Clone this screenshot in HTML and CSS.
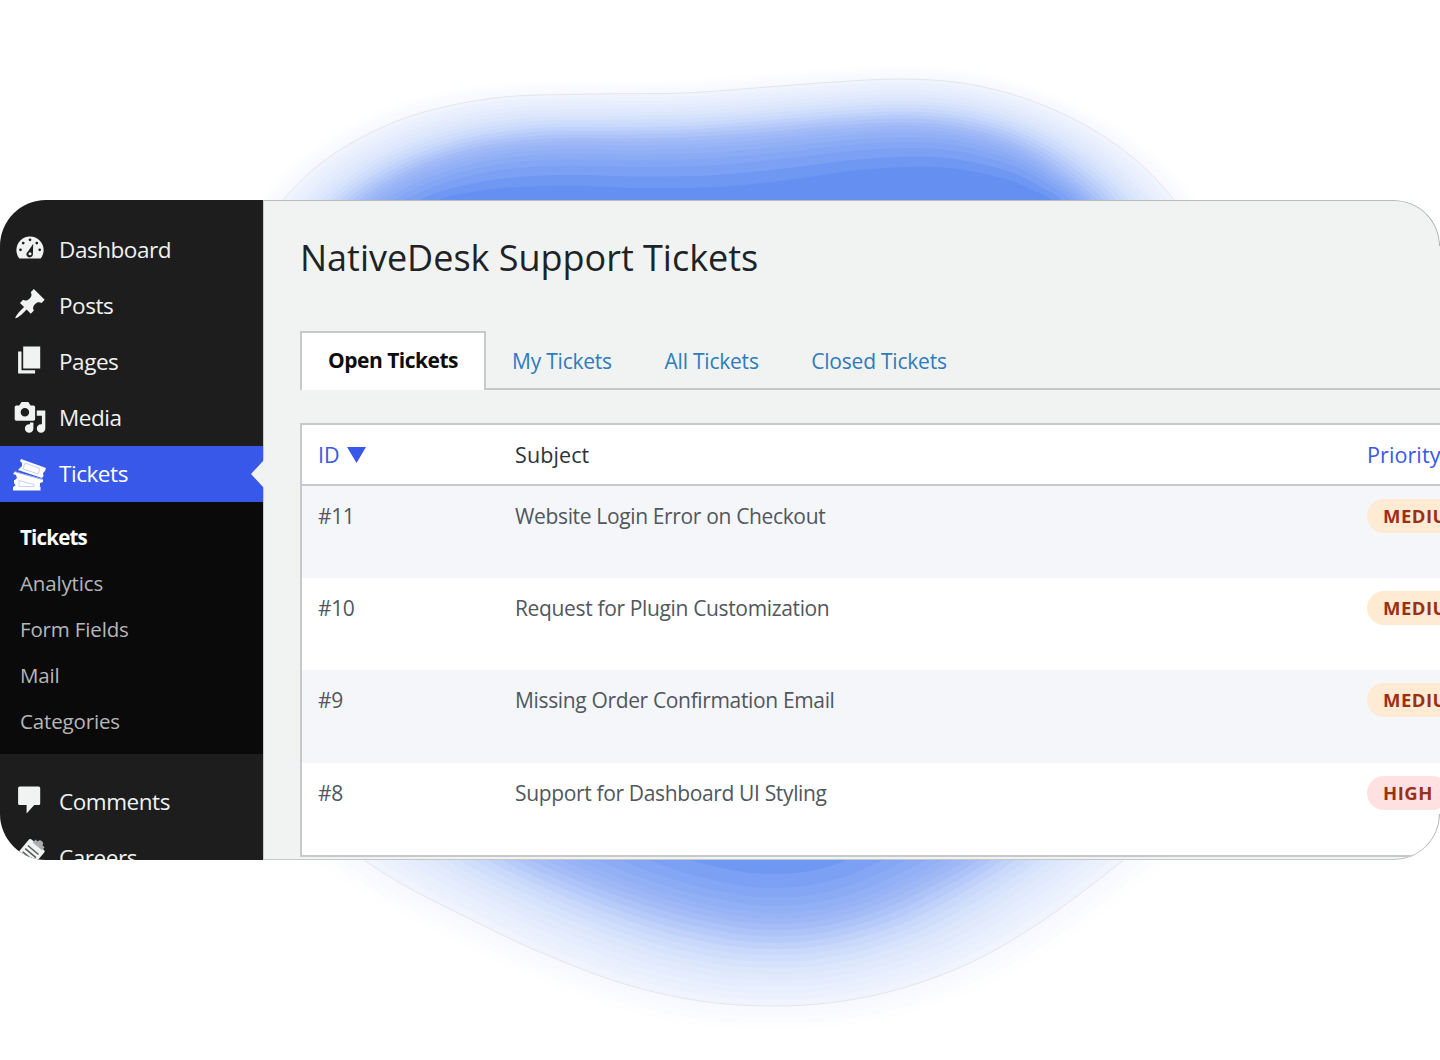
FILE: index.html
```
<!DOCTYPE html>
<html lang="en">
<head>
    <meta charset="UTF-8">
    <meta name="viewport" content="width=device-width, initial-scale=1.0">
    <title>NativeDesk Support Tickets</title>
    <link rel="stylesheet" href="styles.css">
</head>
<body>

    <div class="hero">
        <svg class="glow" id="glow" width="1440" height="1060" viewBox="0 0 1440 1060"></svg>

        <div class="card">
            <!-- Admin menu -->
            <nav class="sidebar">
                <a class="menu-item">
                    <svg class="icon" viewBox="0 .8 20 20">
                        <path d="M3.76 17h12.48c1.1-1.37 1.76-3.11 1.76-5 0-4.42-3.58-8-8-8s-8 3.58-8 8c0 1.89.66 3.63 1.76 5z"/>
                        <g class="cut">
                            <circle cx="10" cy="6" r=".8"/><circle cx="6" cy="7.9" r=".8"/><circle cx="14" cy="7.9" r=".8"/>
                            <circle cx="4.4" cy="11.9" r=".8"/><circle cx="15.7" cy="11.9" r=".8"/>
                            <path d="M11.9 8.3 11.7 14.2a1.900 1.900 0 1 1-2.900-1.400z"/>
                        </g>
                        <circle cx="10" cy="14.2" r=".9"/>
                    </svg>
                    <span>Dashboard</span>
                </a>
                <a class="menu-item">
                    <svg class="icon" viewBox="0 0 20 20"><path d="M10.44 3.02l1.82-1.82 6.36 6.35-1.83 1.82c-1.05-.68-2.48-.57-3.41.36l-.75.75c-.92.93-1.04 2.35-.35 3.41l-1.83 1.82-2.41-2.41-2.8 2.79c-.42.42-3.38 2.71-3.8 2.29s1.86-3.39 2.28-3.81l2.79-2.79L4.1 9.36l1.83-1.82c1.05.69 2.48.57 3.4-.36l.75-.75c.93-.92 1.05-2.35.36-3.41z"/></svg>
                    <span>Posts</span>
                </a>
                <a class="menu-item">
                    <svg class="icon" viewBox="0 0 20 20"><path d="M6 15V2h10v13H6zm-1 1h8v2H3V5h2v11z"/></svg>
                    <span>Pages</span>
                </a>
                <a class="menu-item">
                    <svg class="icon" viewBox="0 -.8 20 20"><path d="M13 11V4c0-.55-.45-1-1-1h-1.67L9 1H5L3.67 3H2c-.55 0-1 .45-1 1v7c0 .55.45 1 1 1h10c.55 0 1-.45 1-1zM7 4.5c1.38 0 2.5 1.12 2.5 2.5S8.38 9.5 7 9.5 4.5 8.38 4.5 7 5.62 4.5 7 4.5zM14 6h5v10.5c0 1.38-1.12 2.5-2.5 2.5S14 17.88 14 16.5s1.12-2.5 2.5-2.5c.17 0 .34.02.5.05V9h-3V6zm-4 8.05V13h2v3.5c0 1.38-1.12 2.5-2.5 2.5S7 17.88 7 16.5 8.12 14 9.5 14c.17 0 .34.02.5.05z"/></svg>
                    <span>Media</span>
                </a>
                <a class="menu-item active">
                    <svg class="icon" viewBox="0 0 34 34">
                        <path d="M8 1 33 10 32 13 30 15 30.500 18 29 20 5 12 9 8 9 5 7 3z"/>
                        <path d="M2 13.500 30 21 30 24 27 25 27 28 2 22 4 20 3 17 0 16z"/>
                        <path d="M1 22h26v3l-1.500 2 2 2v3.500H0V29l2.500-1.500L1 25z"/>
                        <g class="perforation">
                            <path d="M12 5 27 10.500 25 16 10 11z"/>
                            <path class="gap" d="M3 14 29.500 21.500"/>
                            <path d="M6 28.500v-6l15 4v2z"/>
                        </g>
                    </svg>
                    <span>Tickets</span>
                </a>

                <div class="submenu">
                    <a class="current">Tickets</a>
                    <a>Analytics</a>
                    <a>Form Fields</a>
                    <a>Mail</a>
                    <a>Categories</a>
                </div>

                <a class="menu-item">
                    <svg class="icon" viewBox="0 0 20 20"><path d="M4 2h11c.55 0 1 .45 1 1v9c0 .55-.45 1-1 1h-2.500L8 18v-5H4c-.55 0-1-.45-1-1V3c0-.55.45-1 1-1z"/></svg>
                    <span>Comments</span>
                </a>
                <a class="menu-item">
                    <svg class="icon" viewBox="0 0 34 34">
                        <g transform="rotate(40 19 14)">
                            <rect x="8" y="4" width="20" height="26" rx="2"/>
                            <path class="clip" d="M13 5.500V1.500h3a3 3 0 0 1 6 0h3v4z"/>
                            <path class="lines" d="M11 11h14M11 15h14M11 19h14M11 23h14"/>
                        </g>
                    </svg>
                    <span>Careers</span>
                </a>
            </nav>

            <!-- Ticket list -->
            <main class="content">
                <h1>NativeDesk Support Tickets</h1>

                <div class="tabs">
                    <a class="tab tab-active">Open Tickets</a>
                    <a class="tab">My Tickets</a>
                    <a class="tab">All Tickets</a>
                    <a class="tab">Closed Tickets</a>
                </div>

                <div class="table">
                    <div class="row head">
                        <div class="col-id sortable">ID <svg class="arrow" width="19" height="16" viewBox="0 0 19 16"><path d="M0 0h19L9.500 16z"/></svg></div>
                        <div class="col-subject">Subject</div>
                        <div class="col-priority sortable">Priority</div>
                    </div>
                    <div class="row">
                        <div class="col-id">#11</div>
                        <div class="col-subject">Website Login Error on Checkout</div>
                        <div class="col-priority"><span class="badge medium">MEDIUM</span></div>
                    </div>
                    <div class="row">
                        <div class="col-id">#10</div>
                        <div class="col-subject">Request for Plugin Customization</div>
                        <div class="col-priority"><span class="badge medium">MEDIUM</span></div>
                    </div>
                    <div class="row">
                        <div class="col-id">#9</div>
                        <div class="col-subject">Missing Order Confirmation Email</div>
                        <div class="col-priority"><span class="badge medium">MEDIUM</span></div>
                    </div>
                    <div class="row">
                        <div class="col-id">#8</div>
                        <div class="col-subject">Support for Dashboard UI Styling</div>
                        <div class="col-priority"><span class="badge high">HIGH</span></div>
                    </div>
                </div>
            </main>
        </div>
    </div>

    <script src="glow.js"></script>
</body>
</html>
```
FILE: styles.css
```
* {
    box-sizing: border-box;
}
body {
    margin: 0;
    background: #fff;
    font-family: "Open Sans", "Noto Sans", sans-serif;
}
.hero {
    position: relative;
    width: 1440px;
    height: 1060px;
    padding-top: 200px;
    overflow: hidden;
}
.glow {
    position: absolute;
    top: 0;
    left: 0;
}
.card {
    position: relative;
    display: flex;
    height: 660px;
    border-radius: 46px;
    overflow: hidden;
    background: #f1f3f2;
}
.card::after {
    content: "";
    position: absolute;
    inset: 0 0 0 264px;
    border-radius: 0 46px 46px 0;
    border: 1px solid transparent;
    border-left: 0;
    border-top-color: #b9bbbc;
    border-bottom-color: #c6c8c8;
    border-right-color: rgba(0, 0, 0, 0.3);
    clip-path: polygon(0 0, 100% 0, 100% 46px, calc(100% - 1px) 46px, calc(100% - 1px) 614px, 100% 614px, 100% 100%, 0 100%);
}

/* Sidebar */
.sidebar {
    flex: 0 0 264px;
    padding-top: 22px;
    background: #1d1d1d;
    border-right: 1px solid #c9cbcb;
    color: #f0f1f1;
}
.menu-item {
    display: flex;
    align-items: center;
    height: 56px;
    padding: 0 0 2px 13px;
    font-size: 22.5px;
    letter-spacing: -0.45px;
    position: relative;
}
.icon {
    width: 34px;
    height: 34px;
    margin: -2px 12px 0 0;
    fill: #f1f3f3;
}
.cut {
    fill: #1d1d1d;
}
.active {
    background: #3858e9;
    color: #fff;
}
.active .icon {
    margin-top: 4px;
    fill: #fff;
}
.active::after {
    content: "";
    position: absolute;
    right: -1px;
    top: 14px;
    border: 14px solid transparent;
    border-left: 0;
    border-right: 13px solid #f1f3f2;
}
.perforation {
    fill: none;
    stroke: #b9c5f9;
    stroke-width: 0.8;
}
.gap {
    stroke: #6f88f0;
}
.clip {
    fill: #aaacad;
}
.lines {
    fill: none;
    stroke: #555;
    stroke-width: 1.4;
}
.submenu {
    display: flex;
    flex-direction: column;
    height: 252px;
    padding: 12px 0 0 20px;
    margin-bottom: 20px;
    background: #0a0a0a;
    color: #b5b7b8;
    font-size: 20.5px;
}
.submenu a {
    line-height: 46.1px;
    letter-spacing: -0.15px;
}
.submenu .current {
    color: #fff;
    font-weight: 700;
    letter-spacing: -0.8px;
}

/* Content */
.content {
    flex: 1;
    min-width: 0;
    padding: 34px 0 0 36px;
}
h1 {
    margin: 0;
    height: 97px;
    font-size: 36px;
    line-height: 48px;
    font-weight: 400;
    letter-spacing: -0.02px;
    color: #1d2327;
    white-space: nowrap;
}
.tabs {
    display: flex;
    height: 59px;
    border-bottom: 2px solid #c6c8ca;
    font-size: 21px;
    line-height: 60px;
    letter-spacing: -0.22px;
    white-space: nowrap;
}
.tab {
    margin-left: 26px;
    padding-right: 26.6px;
    color: #2e7bbd;
}
.tab-active {
    width: 186px;
    height: 59px;
    margin-left: 0;
    padding-left: 26px;
    background: #fff;
    border: 2px solid #c6c8ca;
    border-bottom: 0;
    color: #0c0d0e;
    font-weight: 700;
    line-height: 55px;
    letter-spacing: -0.5px;
}
.table {
    width: 1300px;
    margin-top: 33px;
    border: 2px solid #c6c8ca;
    background: #fff;
    color: #50575e;
    font-size: 21px;
    letter-spacing: -0.35px;
}
.row {
    display: flex;
    height: 92.4px;
    padding: 14px 0 0 16px;
    line-height: 32px;
    white-space: nowrap;
}
.row:nth-child(even) {
    background: #f5f6f9;
}
.head {
    height: 60.6px;
    border-bottom: 2px solid #c6c8ca;
    color: #2c3338;
    font-size: 21.5px;
    letter-spacing: 0.1px;
}
.col-id {
    width: 197px;
}
.col-subject {
    width: 852px;
}
.sortable {
    color: #3858e9;
}
.arrow {
    margin-left: 1px;
    fill: #3858e9;
}
.badge {
    display: block;
    width: max-content;
    height: 34px;
    margin-top: -1px;
    padding: 0 16px;
    border-radius: 17px;
    font-size: 18.5px;
    line-height: 34px;
    font-weight: 700;
    letter-spacing: 0.5px;
    color: #9a3116;
}
.medium {
    background: #ffebd3;
}
.high {
    background: #ffe1e1;
}
```
FILE: glow.js
```
// Each entry holds the same anchor on the outer, middle and inner contour
const anchors = [
    [283, 200, 362, 200, 439, 200],
    [332, 155, 417, 168, 478, 191],
    [405, 118, 482, 148, 520, 187],
    [494, 98, 552, 140, 575, 186],
    [595, 94, 632, 140, 642, 188],
    [684, 93, 700, 138, 718, 187],
    [767, 87, 772, 133, 795, 179],
    [834, 82, 840, 127, 850, 171],
    [901, 79, 904, 124, 907, 167],
    [962, 83, 955, 128, 950, 168],
    [1024, 98, 1000, 139, 980, 173],
    [1085, 125, 1037, 156, 1010, 180],
    [1136, 160, 1067, 177, 1033, 190],
    [1174, 200, 1094, 200, 1052, 200],
    [1198, 240, 1122, 235, 1074, 225],
    [1225, 400, 1140, 400, 1090, 400],
    [1210, 740, 1090, 740, 960, 740],
    [1155, 830, 1005, 835, 875, 815],
    [1121, 862, 970, 862, 855, 835],
    [1041, 922, 925, 886, 835, 847],
    [972, 962, 875, 909, 815, 853],
    [903, 988, 832, 921, 798, 856],
    [837, 1002, 800, 926, 784, 857],
    [771, 1006, 771, 927, 771, 857],
    [700, 1001, 737, 924, 758, 857],
    [621, 983, 680, 912, 735, 854],
    [535, 950, 622, 894, 715, 850],
    [474, 921, 577, 877, 700, 844],
    [409, 888, 540, 861, 687, 838],
    [360, 857, 510, 843, 675, 828],
    [325, 825, 480, 815, 655, 805],
    [245, 700, 360, 700, 540, 700],
    [230, 400, 315, 400, 400, 400],
    [256, 245, 332, 235, 414, 225]
];

// [position between contours, colour]
const stops = [
    [-0.17, 255, 255, 255],
    [-0.1, 250, 251, 255],
    [-0.01, 246, 248, 254],
    [0, 240, 244, 254],
    [0.2, 221, 231, 252],
    [0.3, 206, 220, 251],
    [0.4, 182, 203, 249],
    [0.5, 161, 186, 247],
    [0.65, 139, 171, 245],
    [0.85, 114, 154, 243],
    [1, 101, 144, 241]
];

// control point next to b, along prev -> next, never longer than a third of the segment
function handle(b, prev, next, other, dir) {
    const tx = next[0] - prev[0], ty = next[1] - prev[1];
    const len = Math.hypot(tx, ty) || 1;
    const reach = Math.min(len / 6, Math.hypot(other[0] - b[0], other[1] - b[1]) / 3);
    return `${b[0] + dir * tx / len * reach} ${b[1] + dir * ty / len * reach}`;
}

function contour(t) {
    const k = t < 0.5 ? t * 2 : t * 2 - 1;
    const o = t < 0.5 ? 0 : 2;
    const p = anchors.map(a => [a[o] + (a[o + 2] - a[o]) * k, a[o + 1] + (a[o + 3] - a[o + 1]) * k]);
    const n = p.length;
    let d = `M${p[0]}`;
    for (let i = 0; i < n; i++) {
        const a = p[(i + n - 1) % n], b = p[i], c = p[(i + 1) % n], e = p[(i + 2) % n];
        d += `C${handle(b, a, c, c, 1)} ${handle(c, b, e, b, -1)} ${c[0]} ${c[1]}`;
    }
    return d;
}

function colour(t) {
    let i = 1;
    while (i < stops.length - 1 && stops[i][0] < t) i++;
    const a = stops[i - 1], b = stops[i];
    const k = Math.min(1, (t - a[0]) / (b[0] - a[0]));
    return `rgb(${[1, 2, 3].map(j => Math.round(a[j] + (b[j] - a[j]) * k))})`;
}

// fine layers outside, wider ones towards the middle
const layers = [-0.15, -0.11, -0.07, -0.03, 0, 0.04, 0.08, 0.12, 0.16, 0.2, 0.24, 0.28, 0.32, 0.36, 0.4, 0.44, 0.48, 0.52, 0.56, 0.6, 0.65, 0.71, 0.78, 0.88, 0.9999];

document.getElementById("glow").innerHTML = layers.map(t => {
    const stroke = t === 0 ? ' stroke="#e6e6e7"' : "";
    return `<path d="${contour(t)}" fill="${colour(t)}"${stroke}/>`;
}).join("");
```
